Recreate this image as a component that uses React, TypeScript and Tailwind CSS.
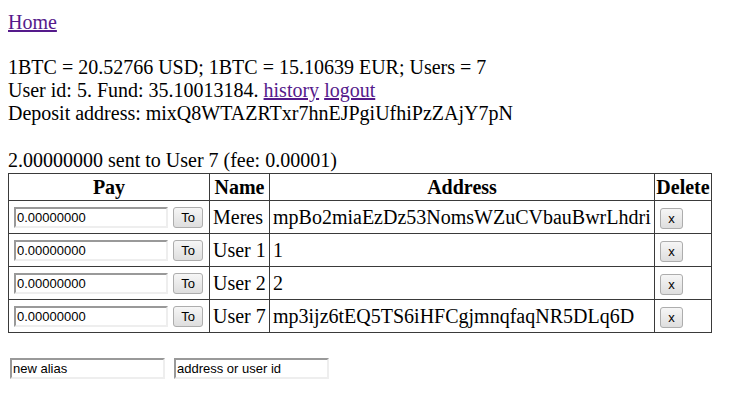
const users = [
  { name: 'Meres', address: 'mpBo2miaEzDz53NomsWZuCVbauBwrLhdri' },
  { name: 'User 1', address: '1' },
  { name: 'User 2', address: '2' },
  { name: 'User 7', address: 'mp3ijz6tEQ5TS6iHFCgjmnqfaqNR5DLq6D' },
]

const inputCls =
  "h-[21px] border-2 border-t-[#999] border-l-[#999] border-b-[#eee] border-r-[#eee] bg-white px-[1px] font-['Liberation_Sans'] text-[13px] leading-none text-black outline-none"

const btnCls =
  "h-[21px] rounded-[3px] border border-[#adadad] bg-gradient-to-b from-[#f6f6f6] to-[#dedede] font-['Liberation_Sans'] text-[13px] leading-none text-black"

export default function App() {
  return (
    <div className="min-h-[411px] bg-white p-2 font-['Liberation_Serif',serif] text-[20px] leading-[23px] text-black">
      <div className="pt-[3px]">
        <a href="#" className="text-[#551a8b] underline">Home</a>
      </div>
      <div className="mt-[22px]">1BTC = 20.52766 USD; 1BTC = 15.10639 EUR; Users = 7</div>
      <div>
        User id: 5. Fund: 35.10013184.{' '}
        <a href="#" className="text-[#551a8b] underline">history</a>{' '}
        <a href="#" className="text-[#551a8b] underline">logout</a>
      </div>
      <div>Deposit address: mixQ8WTAZRTxr7hnEJPgiUfhiPzZAjY7pN</div>
      <div className="mt-[24px]">2.00000000 sent to User 7 (fee: 0.00001)</div>

      <table className="mt-[1px] border-collapse border border-[#3a3a3a]">
        <thead>
          <tr className="h-[27px]">
            <th className="w-[201px] border border-[#3a3a3a] p-0 text-center font-bold">Pay</th>
            <th className="w-[60px] border border-[#3a3a3a] p-0 text-center font-bold">Name</th>
            <th className="w-[385px] border border-[#3a3a3a] p-0 text-center font-bold">Address</th>
            <th className="w-[57px] border border-[#3a3a3a] p-0 text-center font-bold">Delete</th>
          </tr>
        </thead>
        <tbody>
          {users.map((u) => (
            <tr key={u.name} className="h-[33px]">
              <td className="border border-[#3a3a3a] py-0 pl-[5px] pr-0 align-middle">
                <div className="flex items-center gap-[5px]">
                  <input className={`${inputCls} w-[154px]`} defaultValue="0.00000000" />
                  <button className={`${btnCls} w-[30px]`}>To</button>
                </div>
              </td>
              <td className="whitespace-nowrap border border-[#3a3a3a] px-[3px] py-0 align-middle">{u.name}</td>
              <td className="whitespace-nowrap border border-[#3a3a3a] px-[3px] py-0 align-middle">{u.address}</td>
              <td className="border border-[#3a3a3a] py-0 pl-[5px] pr-0 align-middle">
                <button className={`${btnCls} w-[23px] text-[12px]`}>x</button>
              </td>
            </tr>
          ))}
        </tbody>
      </table>

      <div className="mt-[25px] flex gap-[9px] pl-[2px]">
        <input className={`${inputCls} w-[155px]`} defaultValue="new alias" />
        <input className={`${inputCls} w-[155px]`} defaultValue="address or user id" />
      </div>
    </div>
  )
}
